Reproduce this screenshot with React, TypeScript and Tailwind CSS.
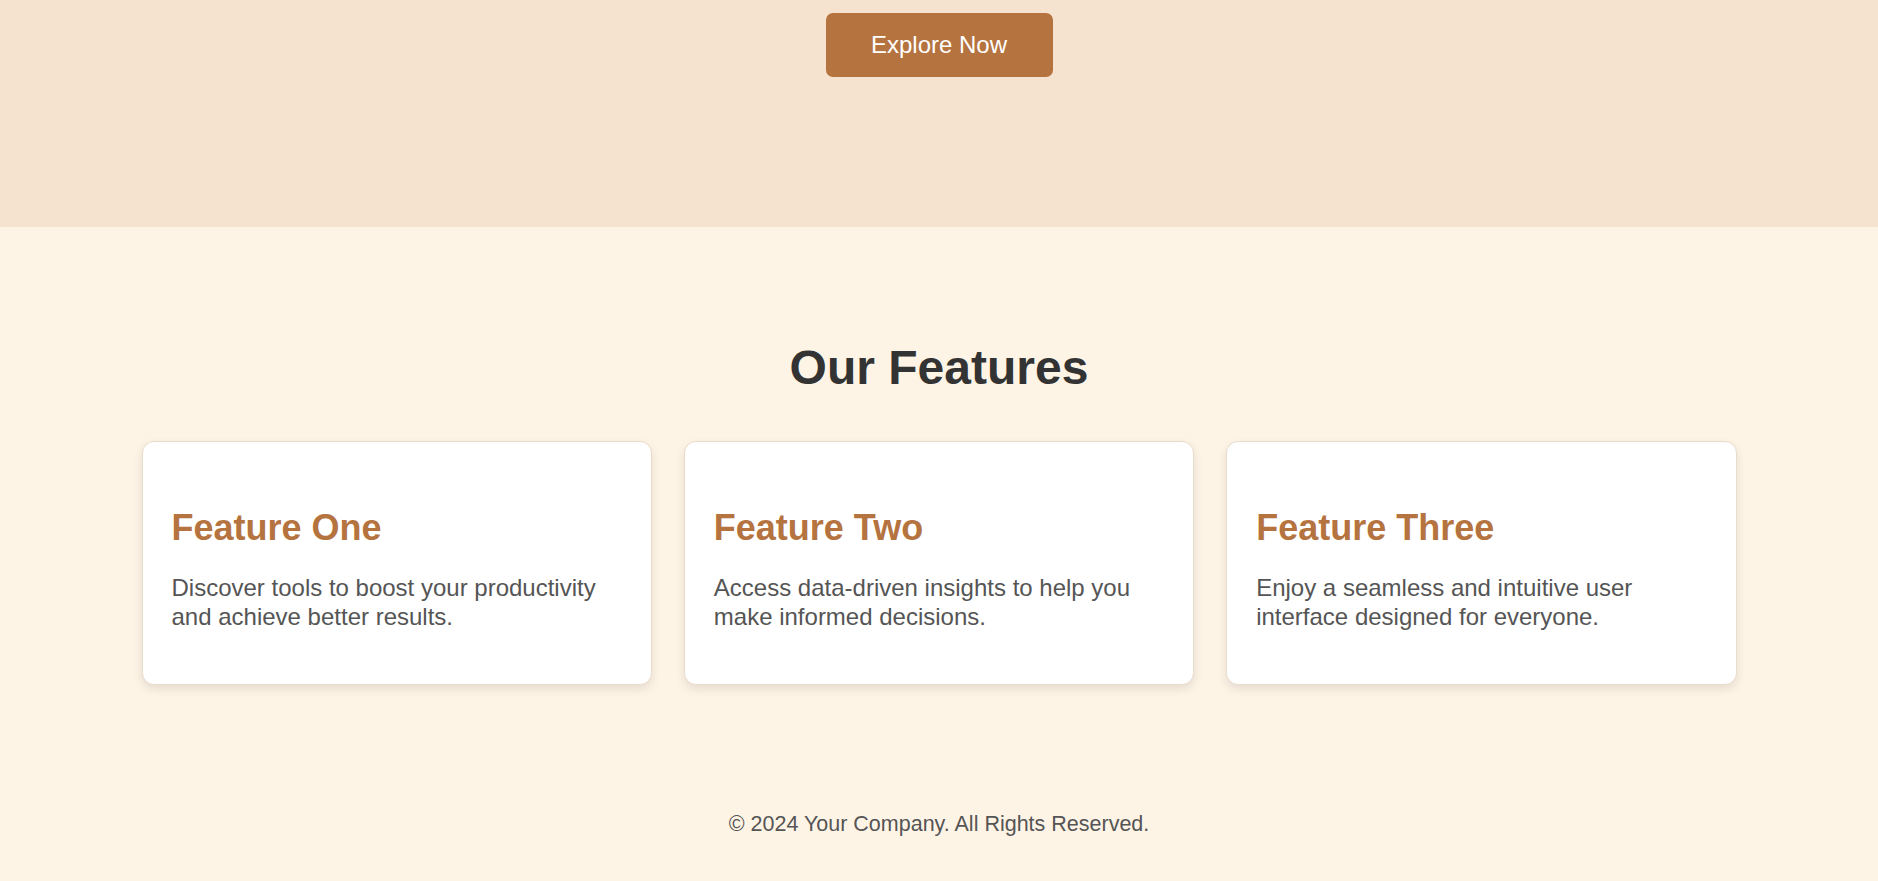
import React from "react";

const features = [
  {
    title: "Feature One",
    text: "Discover tools to boost your productivity and achieve better results.",
  },
  {
    title: "Feature Two",
    text: "Access data-driven insights to help you make informed decisions.",
  },
  {
    title: "Feature Three",
    text: "Enjoy a seamless and intuitive user interface designed for everyone.",
  },
];

export default function App() {
  return (
    <div
      className="min-h-screen bg-[#fef4e6]"
      style={{ fontFamily: '"Liberation Sans", Arial, sans-serif' }}
    >
      <header className="h-[227px] bg-[#f5e3cf] flex justify-center pt-[13px]">
        <button className="w-[227px] h-[64px] rounded-[7px] bg-[#b5733f] text-white text-[24px] leading-none">
          Explore Now
        </button>
      </header>

      <section className="pt-[113px] pb-[80px]">
        <h2 className="text-center text-[48px] leading-[56px] font-bold text-[#333333] mb-[45px]">
          Our Features
        </h2>
        <div className="mx-auto w-[1595px] grid grid-cols-3 gap-[32px]">
          {features.map((f) => (
            <div
              key={f.title}
              className="bg-white border border-[#e9dccb] rounded-[12px] shadow-[0_4px_10px_rgba(0,0,0,0.1)] h-[244px] px-[29px] pt-[65px]"
            >
              <h3 className="text-[36px] leading-[42px] font-bold text-[#b5733f]">
                {f.title}
              </h3>
              <p className="mt-[25px] text-[24px] leading-[28.8px] text-[#555555]">
                {f.text}
              </p>
            </div>
          ))}
        </div>
      </section>

      <footer className="text-center pt-[47px] pb-[47px] text-[21.5px] leading-[25px] text-[#555555]">
        © 2024 Your Company. All Rights Reserved.
      </footer>
    </div>
  );
}
